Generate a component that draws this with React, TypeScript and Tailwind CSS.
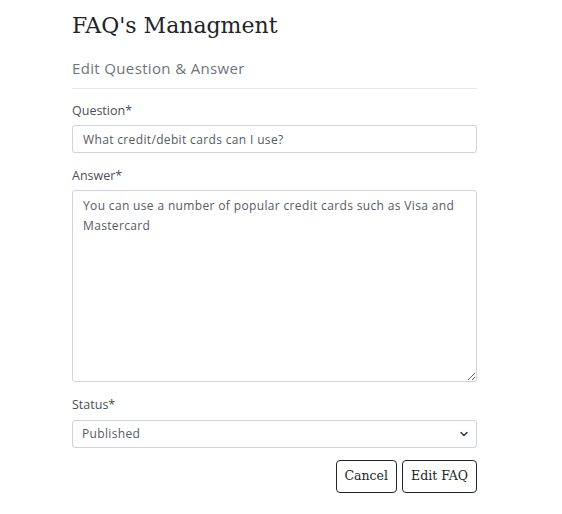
import { ChevronDown } from 'lucide-react'

const slab = { fontFamily: '"DejaVu Serif", "Liberation Serif", serif' }

export default function App() {
    return (
        <div className="min-h-screen bg-white font-['Open_Sans','Inter',sans-serif] text-[#212529]">
            <div className="ml-[72px] w-[405px] pt-[10px]">
                <h1 style={slab} className="text-[22px] leading-[32px] font-light text-[#212529]">FAQ's Managment</h1>

                <h2 className="mt-[16px] text-[15px] leading-[20px] tracking-[0.35px] text-[#6c757d]">Edit Question &amp; Answer</h2>
                <div className="mt-[10px] border-t border-[#e5e7eb]" />

                <div className="mt-[13px]">
                    <label className="block text-[12.5px] leading-[18px] text-[#495057]">Question*</label>
                    <input
                        className="mt-[5px] block h-[28px] w-full rounded-[3px] border border-[#ced4da] px-[10px] text-[12px] tracking-[0.35px] text-[#555b61] outline-none"
                        defaultValue="What credit/debit cards can I use?"
                    />
                </div>

                <div className="mt-[14px]">
                    <label className="block text-[12.5px] leading-[18px] text-[#495057]">Answer*</label>
                    <textarea
                        className="mt-[5px] block h-[192px] w-full resize-y rounded-[3px] border border-[#ced4da] px-[10px] py-[5px] text-[12px] leading-[20px] tracking-[0.35px] text-[#555b61] outline-none"
                        defaultValue="You can use a number of popular credit cards such as Visa and Mastercard"
                    />
                </div>

                <div className="mt-[14px]">
                    <label className="block text-[12.5px] leading-[18px] text-[#495057]">Status*</label>
                    <div className="relative mt-[6px]">
                        <select className="block h-[28px] w-full appearance-none rounded-[3px] border border-[#ced4da] bg-white px-[9px] text-[12px] tracking-[0.35px] text-[#555b61] outline-none">
                            <option>Published</option>
                            <option>Draft</option>
                        </select>
                        <ChevronDown className="pointer-events-none absolute right-[7px] top-[8px] h-[12px] w-[12px] text-[#343a40]" strokeWidth={3} />
                    </div>
                </div>

                <div className="mt-[12px] flex justify-end gap-[5px]">
                    <button style={slab} className="h-[33px] rounded-[4px] border border-[#212529] px-[8px] text-[12.5px] text-[#212529]">
                        Cancel
                    </button>
                    <button style={slab} className="h-[33px] rounded-[4px] border border-[#212529] px-[8px] text-[12.5px] text-[#212529]">
                        Edit FAQ
                    </button>
                </div>
            </div>
        </div>
    )
}
